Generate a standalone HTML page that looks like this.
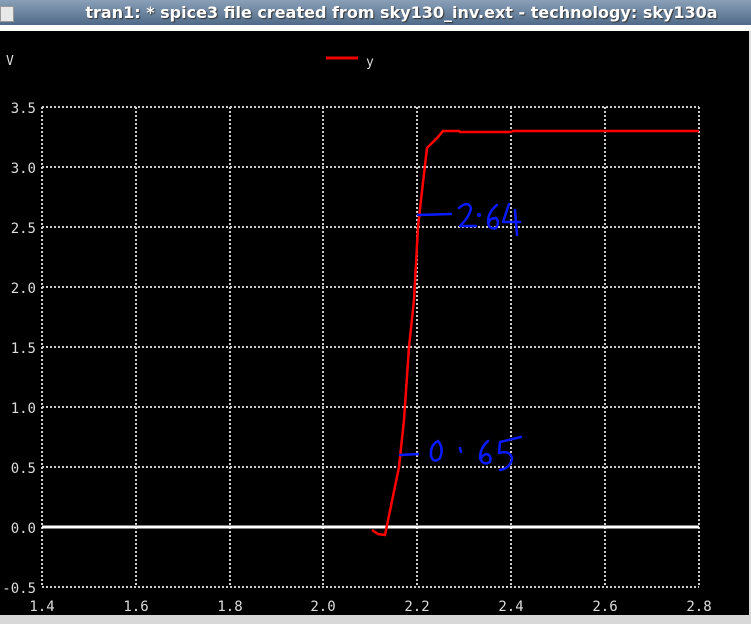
<!DOCTYPE html>
<html><head><meta charset="utf-8"><style>
html,body{margin:0;padding:0;width:751px;height:624px;overflow:hidden;background:#000;}
.title{position:absolute;left:0;top:0;width:751px;height:25px;background:linear-gradient(#8aa0b8,#4f6a88);color:#fff;font:bold 16px "DejaVu Sans","Liberation Sans",sans-serif;line-height:25px;text-align:center;text-shadow:1px 1px 1px #333;white-space:nowrap;}
.title span{position:relative;left:26px;}
.icon{position:absolute;left:0;top:6px;width:12px;height:14px;background:#e8e8e8;border:1px solid #999;}
.sep{position:absolute;left:0;top:25px;width:751px;height:6px;background:#fff;}
.bot{position:absolute;left:0;top:615px;width:751px;height:9px;background:#d8d8d8;}
.rgt{position:absolute;left:749px;top:31px;width:2px;height:584px;background:#ddd;}
svg{position:absolute;left:0;top:0;}
</style></head><body>
<div class="title"><div class="icon"></div><span>tran1: * spice3 file created from sky130_inv.ext - technology: sky130a</span></div>
<div class="sep"></div>
<svg width="751" height="624" viewBox="0 0 751 624" font-family="'DejaVu Sans Mono','Liberation Mono',monospace" font-size="14" fill="#ddd">
<g stroke="#ccc" stroke-width="2" stroke-dasharray="2,2">
<line x1="42" y1="107" x2="699" y2="107"/><line x1="42" y1="167" x2="699" y2="167"/>
<line x1="42" y1="227" x2="699" y2="227"/><line x1="42" y1="287" x2="699" y2="287"/>
<line x1="42" y1="347" x2="699" y2="347"/><line x1="42" y1="407" x2="699" y2="407"/>
<line x1="42" y1="467" x2="699" y2="467"/><line x1="42" y1="587" x2="699" y2="587"/>
<line x1="42" y1="107" x2="42" y2="587"/><line x1="136" y1="107" x2="136" y2="587"/>
<line x1="230" y1="107" x2="230" y2="587"/><line x1="323" y1="107" x2="323" y2="587"/>
<line x1="417" y1="107" x2="417" y2="587"/><line x1="511" y1="107" x2="511" y2="587"/>
<line x1="605" y1="107" x2="605" y2="587"/><line x1="699" y1="107" x2="699" y2="587"/>
</g>
<line x1="42" y1="527" x2="699" y2="527" stroke="#fff" stroke-width="3"/>
<text x="6" y="65" font-size="13">V</text>
<line x1="326" y1="58" x2="358" y2="58" stroke="#e00" stroke-width="3"/>
<text x="366" y="66" font-size="13">y</text>
<g text-anchor="end">
<text x="36" y="113">3.5</text><text x="36" y="173">3.0</text><text x="36" y="233">2.5</text>
<text x="36" y="293">2.0</text><text x="36" y="353">1.5</text><text x="36" y="413">1.0</text>
<text x="36" y="473">0.5</text><text x="36" y="533">0.0</text><text x="36" y="593">-0.5</text>
</g>
<g text-anchor="middle">
<text x="42" y="611">1.4</text><text x="136" y="611">1.6</text><text x="230" y="611">1.8</text>
<text x="323" y="611">2.0</text><text x="417" y="611">2.2</text><text x="511" y="611">2.4</text>
<text x="605" y="611">2.6</text><text x="699" y="611">2.8</text>
</g>
<polyline fill="none" stroke="#f00" stroke-width="2.5" points="372,530 378,534 385,535 399,467 404,420 409,347 414,300 418,227 421,200 427,148 429,146 438,137 443,131 459,131 460,132 511,132 513,131 699,131"/>
<g fill="none" stroke="#0a1aff" stroke-width="2.5" stroke-linecap="round" stroke-linejoin="round">
<path d="M418,215 L451,214"/>
<path d="M459,208 Q468,200 471,208 Q470,216 460,226 L476,226"/>
<circle cx="479" cy="215" r="0.8"/>
<path d="M497,205 Q488,212 488,222 Q489,230 496,228 Q500,222 496,218 Q490,218 489,222"/>
<path d="M509,204 L503,222 L520,222 M515,210 L517,235"/>
<path d="M400,455 L418,454"/>
<path d="M438,441 Q430,445 431,456 Q434,464 440,458 Q444,448 438,441"/>
<path d="M460,448 L461,452"/>
<path d="M488,441 Q480,448 480,458 Q483,466 490,462 Q492,455 486,454 Q481,456 481,459"/>
<path d="M521,437 L500,442 L499,453 Q510,450 512,458 Q511,468 500,470"/>
</g>
</svg>
<div class="rgt"></div>
<div class="bot"></div>
</body></html>
